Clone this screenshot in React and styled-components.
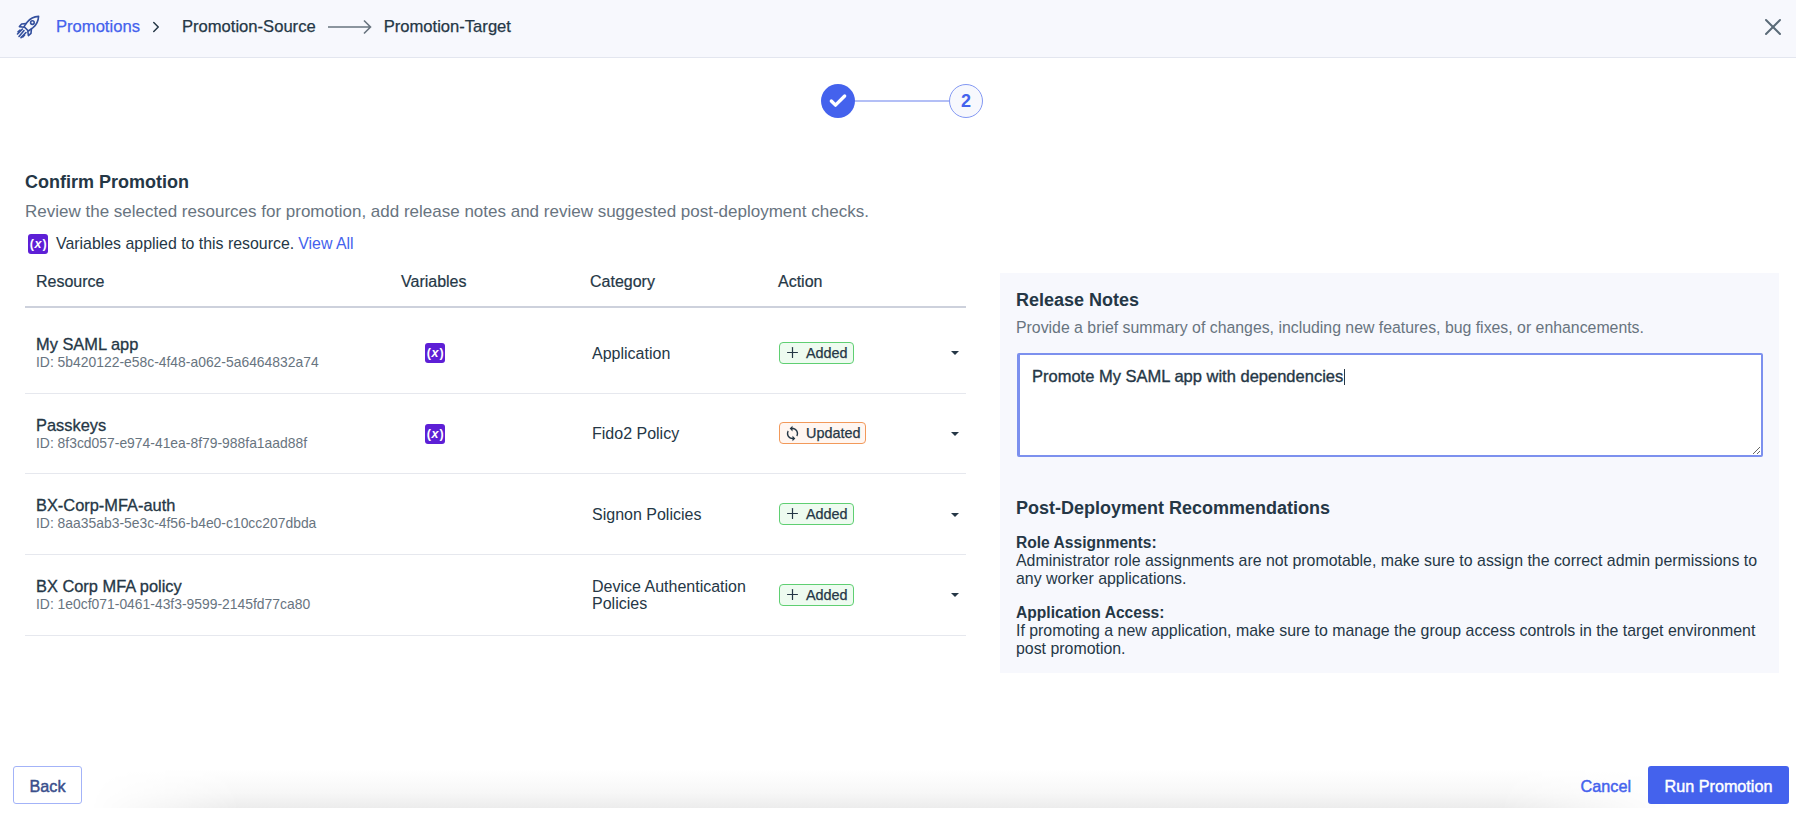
import React from "react";
import styled, { createGlobalStyle } from "styled-components";
import { X, Plus, ChevronRight, Check } from "lucide-react";
import { MdSync } from "react-icons/md";

const Global = createGlobalStyle`
  html, body { margin: 0; padding: 0; background: #fff; }
  * { box-sizing: border-box; }
  body { font-family: "Liberation Sans", Arial, sans-serif; color: #253746; }
`;

const Page = styled.div`
  height: 826px;
  display: flex;
  flex-direction: column;
  overflow: hidden;
`;
const Header = styled.header`
  height: 58px;
  flex: none;
  display: flex;
  align-items: center;
  padding: 0 16px 4px;
  background: #f7f8fd;
  border-bottom: 1px solid #e3e6ef;
  font-size: 16.6px;
`;
const Crumb = styled.span`
  color: ${(p) => (p.$link ? "#4462ed" : "#253746")};
  -webkit-text-stroke: 0.25px currentColor;
`;
const Chevron = styled(ChevronRight)`
  margin: 0 17px 0 7px;
  color: #253746;
`;
const FlowArrow = styled.svg`
  width: 44px;
  height: 16px;
  margin: 0 12px 0 12px;
`;
const Logo = styled.svg`
  width: 24px;
  height: 24px;
  margin-right: 16px;
  color: #34509e;
`;
const CloseBtn = styled.span`
  margin-left: auto;
  margin-right: -7px;
  display: flex;
  color: #5b6b78;
`;
const Stepper = styled.div`
  flex: none;
  display: flex;
  justify-content: center;
  align-items: center;
  padding: 13px 0 19px;
  height: 92px;
  margin-left: 8px;
`;
const StepDone = styled.div`
  width: 34px;
  height: 34px;
  border-radius: 50%;
  background: #4462ed;
  color: #fff;
  display: flex;
  align-items: center;
  justify-content: center;
`;
const StepLine = styled.div`
  width: 94px;
  height: 2px;
  background: #b3bff6;
`;
const StepNext = styled.div`
  width: 34px;
  height: 34px;
  border-radius: 50%;
  background: #f7f8fd;
  border: 1px solid #8398f3;
  color: #4462ed;
  font-weight: 700;
  font-size: 18px;
  display: flex;
  align-items: center;
  justify-content: center;
`;
const Main = styled.main`
  flex: 1;
  display: grid;
  grid-template-columns: 941px 779px;
  column-gap: 34px;
  padding: 0 17px 0 25px;
  align-content: start;
`;
const Intro = styled.div`
  grid-column: 1 / -1;
  padding-top: 22px;
  height: 69px;
`;
const Title = styled.h2`
  margin: 0;
  font-size: 18px;
  line-height: 20px;
  font-weight: 700;
`;
const Sub = styled.p`
  margin: 11px 0 0;
  font-size: 17px;
  line-height: 18px;
  color: #68747f;
`;
const Legend = styled.div`
  grid-column: 1 / -1;
  display: flex;
  align-items: center;
  gap: 8px;
  font-size: 15.9px;
  height: 20px;
  margin: 15px 0 0 3px;
`;
const Link = styled.a`
  color: #4462ed;
  margin-left: -4px;
`;
const VarBadge = styled.span`
  width: 20px;
  height: 20px;
  border-radius: 3px;
  background: #5d1fd6;
  color: #fff;
  flex: none;
  display: inline-flex;
  align-items: center;
  justify-content: center;
  font-size: 12.5px;
  font-weight: 700;
  letter-spacing: -0.2px;
  i { padding: 0 1px; }
`;
const Table = styled.div`
  display: flex;
  flex-direction: column;
  margin-top: 10px;
`;
const columns = "365px 189px 188px 1fr 38px";
const HeadRow = styled.div`
  display: grid;
  grid-template-columns: ${columns};
  height: 44px;
  align-items: center;
  padding: 0 0 6px 11px;
  margin-bottom: 5px;
  border-bottom: 2px solid #cdd1dc;
  font-size: 16px;
  -webkit-text-stroke: 0.2px currentColor;
`;
const Row = styled.div`
  display: grid;
  grid-template-columns: ${columns};
  height: 80.7px;
  align-items: center;
  border-bottom: 1px solid #e6e8ee;
  padding: 1px 0 0 11px;
  font-size: 16px;
`;
const Name = styled.div`
  font-size: 16.4px;
  line-height: 17px;
  -webkit-text-stroke: 0.3px currentColor;
`;
const Id = styled.div`
  font-size: 13.9px;
  line-height: 17px;
  margin-top: 1px;
  color: #68747f;
`;
const VarCell = styled.div`
  padding-left: 24px;
  display: flex;
`;
const Category = styled.div`
  padding-left: 2px;
  line-height: 17.5px;
`;
const Pill = styled.span`
  display: inline-flex;
  align-items: center;
  gap: 5px;
  height: 22px;
  padding: 0 5px 0 4px;
  margin-left: 1px;
  border-radius: 4px;
  font-size: 14.4px;
  border: 1px solid ${(p) => (p.$kind === "updated" ? "#f2995a" : "#5fcf72")};
  background: ${(p) => (p.$kind === "updated" ? "#fff6f1" : "#eefbf0")};
  -webkit-text-stroke: 0.25px currentColor;
`;
const Caret = styled.span`
  justify-self: end;
  margin-right: 7px;
  width: 0;
  height: 0;
  border-left: 4px solid transparent;
  border-right: 4px solid transparent;
  border-top: 4px solid #253746;
`;
const Panel = styled.aside`
  background: #f7f8fd;
  height: 400px;
  padding: 17px 16px 0 16px;
  margin-top: 19px;
`;
const PanelTitle = styled.h3`
  margin: 0;
  font-size: 18px;
  line-height: 20px;
  font-weight: 700;
`;
const PanelSub = styled.p`
  margin: 9px 0 0;
  font-size: 15.85px;
  line-height: 18px;
  color: #68747f;
`;
const NotesWrap = styled.div`
  position: relative;
  margin: 16px 0 0 1px;
`;
const Notes = styled.textarea`
  display: block;
  width: 100%;
  height: 104px;
  padding: 12px 13px 12px 12px;
  background: #fff;
  border: 2px solid #7c90ee;
  border-left-width: 3px;
  border-radius: 2px;
  outline: none;
  font: 16.5px/18px "Liberation Sans", Arial, sans-serif;
  color: #253746;
  -webkit-text-stroke: 0.35px currentColor;
`;
const TextCaret = styled.span`
  position: absolute;
  left: 327px;
  top: 16px;
  width: 1px;
  height: 16px;
  background: #253746;
`;
const RecTitle = styled(PanelTitle)`
  margin: 41px 0 1px;
`;
const Rec = styled.div`
  font-size: 15.9px;
  line-height: 18px;
  margin-top: 16px;
  b { display: block; font-size: 15.6px; }
`;
const Footer = styled.footer`
  position: relative;
  flex: none;
  height: 60px;
  margin-bottom: 18px;
  display: flex;
  align-items: flex-end;
  padding: 0 7px 4px 13px;
  &::before {
    content: "";
    position: absolute;
    inset: 0;
    background: linear-gradient(to top, #ececec 0%, #f7f7f7 25%, #ffffff 65%);
    -webkit-mask-image: linear-gradient(to right, transparent 90px, #000 240px, #000 1500px, transparent 1670px);
    mask-image: linear-gradient(to right, transparent 90px, #000 240px, #000 1500px, transparent 1670px);
  }
`;
const BackBtn = styled.button`
  position: relative;
  width: 69px;
  height: 38px;
  padding: 2px 0 0;
  border: 1px solid #a3b3f8;
  border-radius: 3px;
  background: #fff;
  color: #3a4f8c;
  font: 400 16.2px "Liberation Sans", Arial, sans-serif;
  -webkit-text-stroke: 0.45px currentColor;
`;
const CancelBtn = styled.button`
  position: relative;
  margin-left: auto;
  height: 38px;
  border: 0;
  background: none;
  color: #4462ed;
  padding: 2px 17px 0 0;
  font: 400 16.2px "Liberation Sans", Arial, sans-serif;
  -webkit-text-stroke: 0.45px currentColor;
`;
const RunBtn = styled.button`
  position: relative;
  width: 141px;
  height: 38px;
  padding: 2px 0 0;
  border: 0;
  border-radius: 3px;
  background: #4462ed;
  color: #fff;
  font: 400 16.2px "Liberation Sans", Arial, sans-serif;
  -webkit-text-stroke: 0.45px currentColor;
`;

const Rocket = () => (
  <Logo viewBox="0 0 24 24" fill="none" stroke="currentColor" strokeWidth="1.6" strokeLinecap="round" strokeLinejoin="round">
    <path d="M22.6 1.4c-5 .3-8.6 2.2-11.3 5.6L8 11.6l4.4 4.4 4.6-3.3c3.4-2.7 5.3-6.3 5.6-11.3z" />
    <circle cx="16.4" cy="7.6" r="1.8" />
    <path d="M9.8 8.6 5.6 9 3.4 11.6l4.6.6M15.4 14.2 15 18.4 12.4 20.6l-.6-4.6" />
    <path d="M6.5 14 1.5 19M8 15.6 3 21.5M10 17.5 5 22.6M4 15l-2 1.8M8.6 20l-1.8 2" />
  </Logo>
);
const Var = () => (
  <VarBadge>(<i>x</i>)</VarBadge>
);

const rows = [
  { name: "My SAML app", id: "5b420122-e58c-4f48-a062-5a6464832a74", cat: "Application", v: true, kind: "added" },
  { name: "Passkeys", id: "8f3cd057-e974-41ea-8f79-988fa1aad88f", cat: "Fido2 Policy", v: true, kind: "updated" },
  { name: "BX-Corp-MFA-auth", id: "8aa35ab3-5e3c-4f56-b4e0-c10cc207dbda", cat: "Signon Policies", kind: "added" },
  { name: "BX Corp MFA policy", id: "1e0cf071-0461-43f3-9599-2145fd77ca80", cat: "Device Authentication Policies", kind: "added" },
];

export default function App() {
  return (
    <Page>
      <Global />
      <Header>
        <Rocket />
        <Crumb $link>Promotions</Crumb>
        <Chevron size={18} />
        <Crumb>Promotion-Source</Crumb>
        <FlowArrow viewBox="0 0 44 16" fill="none" stroke="#68747f" strokeWidth="1.6">
          <path d="M0 8h42M36 1.5 42.5 8 36 14.5" />
        </FlowArrow>
        <Crumb>Promotion-Target</Crumb>
        <CloseBtn><X size={28} strokeWidth={1.7} /></CloseBtn>
      </Header>
      <Stepper>
        <StepDone><Check size={20} strokeWidth={4} /></StepDone>
        <StepLine />
        <StepNext>2</StepNext>
      </Stepper>
      <Main>
        <Intro>
          <Title>Confirm Promotion</Title>
          <Sub>Review the selected resources for promotion, add release notes and review suggested post-deployment checks.</Sub>
        </Intro>
        <Legend><Var />Variables applied to this resource.<Link>View All</Link></Legend>
        <Table>
          <HeadRow>
            <span>Resource</span><span>Variables</span><span>Category</span><span>Action</span><span />
          </HeadRow>
          {rows.map((r) => (
            <Row key={r.id}>
              <div>
                <Name>{r.name}</Name>
                <Id>ID: {r.id}</Id>
              </div>
              <VarCell>{r.v && <Var />}</VarCell>
              <Category>{r.cat}</Category>
              <div>
                <Pill $kind={r.kind}>
                  {r.kind === "added" ? <Plus size={17} strokeWidth={1.7} /> : <MdSync size={17} />}
                  {r.kind === "added" ? "Added" : "Updated"}
                </Pill>
              </div>
              <Caret />
            </Row>
          ))}
        </Table>
        <Panel>
          <PanelTitle>Release Notes</PanelTitle>
          <PanelSub>Provide a brief summary of changes, including new features, bug fixes, or enhancements.</PanelSub>
          <NotesWrap>
            <Notes readOnly value="Promote My SAML app with dependencies" />
            <TextCaret />
          </NotesWrap>
          <RecTitle>Post-Deployment Recommendations</RecTitle>
          <Rec><b>Role Assignments:</b>Administrator role assignments are not promotable, make sure to assign the correct admin permissions to any worker applications.</Rec>
          <Rec><b>Application Access:</b>If promoting a new application, make sure to manage the group access controls in the target environment post promotion.</Rec>
        </Panel>
      </Main>
      <Footer>
        <BackBtn>Back</BackBtn>
        <CancelBtn>Cancel</CancelBtn>
        <RunBtn>Run Promotion</RunBtn>
      </Footer>
    </Page>
  );
}
